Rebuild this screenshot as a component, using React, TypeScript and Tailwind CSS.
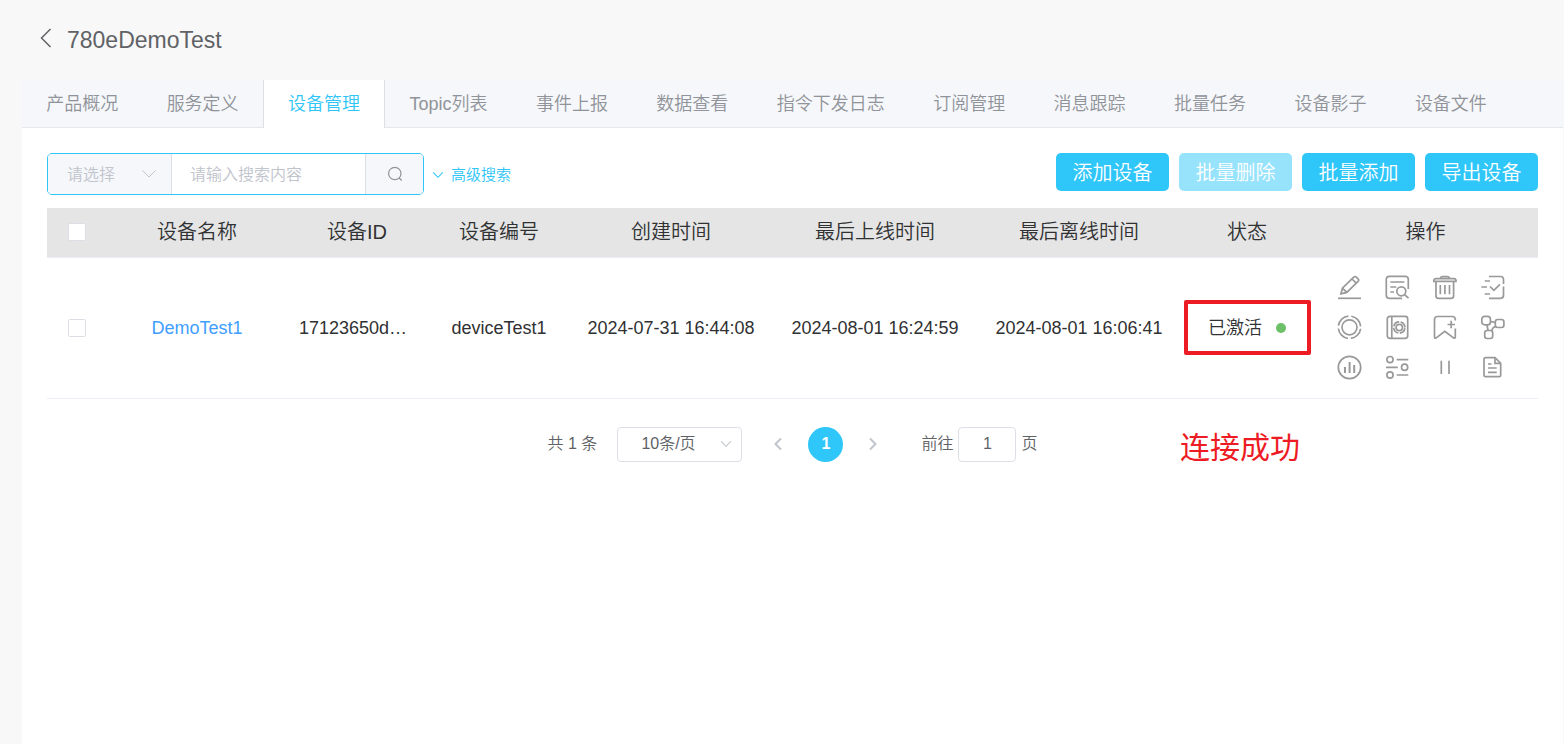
import React from 'react';
import clsx from 'clsx';

const tabs = [
  '产品概况',
  '服务定义',
  '设备管理',
  'Topic列表',
  '事件上报',
  '数据查看',
  '指令下发日志',
  '订阅管理',
  '消息跟踪',
  '批量任务',
  '设备影子',
  '设备文件',
];

const columns = [
  { title: '设备名称', width: 'w-[176px]' },
  { title: '设备ID', width: 'w-[144px]' },
  { title: '设备编号', width: 'w-[140px]' },
  { title: '创建时间', width: 'w-[204px]' },
  { title: '最后上线时间', width: 'w-[204px]' },
  { title: '最后离线时间', width: 'w-[204px]' },
  { title: '状态', width: 'w-[132px]' },
  { title: '操作', width: 'w-[225px]' },
];

const devices = [
  {
    name: 'DemoTest1',
    id: '17123650d…',
    code: 'deviceTest1',
    created: '2024-07-31 16:44:08',
    online: '2024-08-01 16:24:59',
    offline: '2024-08-01 16:06:41',
    status: '已激活',
  },
];

const actions = [
  {
    label: '编辑',
    icon: (
      <>
        <path d="M1 23.3h23" />
        <path d="M4 18.8l1.4-5.6L17 1.9a1.4 1.4 0 0 1 2 0l2.3 2.3a1.4 1.4 0 0 1 0 2L9.8 17.4z" />
        <path d="M5.4 13.2l4.4 4.2M15 4l4.2 4.2" />
      </>
    ),
  },
  {
    label: '查看',
    icon: (
      <>
        <path d="M23.3 14V4.3a3 3 0 0 0-3-3h-16a3 3 0 0 0-3 3v16a3 3 0 0 0 3 3H17" />
        <path d="M5.3 7h14M5.3 12h6M5.3 17H9" />
        <circle cx="16.3" cy="16.3" r="4.5" />
        <path d="M19.6 19.6l3.9 3.6" />
      </>
    ),
  },
  {
    label: '删除',
    icon: (
      <>
        <path d="M2.5 3.7h18.7a2 2 0 0 1 1.8 2.6H.8a2 2 0 0 1 1.7-2.6z" />
        <path d="M7.5 3.7c0-1.4.8-2 2-2h4.8c1.2 0 2 .6 2 2" />
        <path d="M3 6.3V21a2.3 2.3 0 0 0 2.3 2.3h13a2.3 2.3 0 0 0 2.3-2.3V6.3M7.3 10v9.3M11.9 10v9.3M16.5 10v9.3" />
      </>
    ),
  },
  {
    label: '激活',
    icon: (
      <>
        <path d="M8 1.5h11.5a3 3 0 0 1 3 3V9M22.5 11.5v8.8a3 3 0 0 1-3 3H8" />
        <path d="M3.7 6H9M.3 12H6M3.7 19H9M9 11.5l3.9 3.9 6-6" />
      </>
    ),
  },
  {
    label: '状态',
    icon: (
      <>
        <circle cx="12.5" cy="12.3" r="7.5" />
        <circle cx="12.5" cy="12.3" r="11.2" strokeDasharray="14.6 3" strokeDashoffset="-1.5" />
      </>
    ),
  },
  {
    label: '配置',
    icon: (
      <>
        <rect x="2.3" y="1.3" width="20.4" height="22" rx="2.5" />
        <path d="M6.8 1.3v22" />
        <circle cx="14.3" cy="12.5" r="3.2" />
        <circle cx="14.3" cy="12.5" r="5.6" strokeDasharray="7.3 1.5" strokeDashoffset="-.7" />
      </>
    ),
  },
  {
    label: '添加标签',
    icon: (
      <>
        <path d="M22.3 5.5V4.3a2.8 2.8 0 0 0-2.8-2.8H4.3a2.8 2.8 0 0 0-2.8 2.8V22c0 1.2.9 1.5 1.7.8l8.6-6.5 8.7 6.5c.8.7 1.8.4 1.8-.8v-8.5" />
        <path d="M14.5 9.5H22M18.2 5.8v7.5" />
      </>
    ),
  },
  {
    label: '拓扑',
    icon: (
      <>
        <rect x=".8" y="1.3" width="8.6" height="8.6" rx="3" />
        <rect x="14.3" y="4.5" width="8.6" height="8" rx="2.4" />
        <rect x="3.7" y="15.5" width="8" height="8" rx="2.4" />
        <path d="M9.3 6.5l5 .8M6 9.9l1 5.6M15 11.3c-2.5.7-3.8 2.2-4.5 4.7" />
      </>
    ),
  },
  {
    label: '统计',
    icon: (
      <>
        <circle cx="12.5" cy="12.5" r="11.2" />
        <path strokeWidth="2" d="M8 12v6M12.6 7v11M17.2 10v8" />
      </>
    ),
  },
  {
    label: '设置',
    icon: (
      <>
        <circle cx="5" cy="4.6" r="3.1" />
        <circle cx="19.6" cy="12.3" r="3.1" />
        <circle cx="5" cy="20" r="3.1" />
        <path d="M11.7 4.6h11.6M1 12.3h11.8M11.7 20h11.6" />
      </>
    ),
  },
  { label: '暂停', icon: <path d="M8.3 5.7V19M16 5.7V19" /> },
  {
    label: '日志',
    icon: (
      <>
        <path d="M14 2.7H4.5A1.5 1.5 0 0 0 3 4.2v16a1.5 1.5 0 0 0 1.5 1.5h13.7a1.5 1.5 0 0 0 1.5-1.5V8.3z" />
        <path d="M14 2.7v5.6h5.7M7 9h3.5M7 13h8.7M7 17.3h8.7" />
      </>
    ),
  },
];

function Chevron({ d, className }: { d: string; className?: string }) {
  return (
    <svg viewBox="0 0 16 16" fill="none" stroke="currentColor" className={className} aria-hidden="true">
      <path d={d} />
    </svg>
  );
}

const DOWN = 'M1.5 4.5L8 11l6.5-6.5';

function Header() {
  return (
    <header className="flex h-20 items-center gap-3 pl-[37px] text-[#606266]">
      <button aria-label="返回" className="-mt-1">
        <svg viewBox="0 0 18 20" fill="none" stroke="currentColor" strokeWidth="1.5" className="h-5 w-[18px]">
          <path d="M13.5 1L4.5 10l9 9" />
        </svg>
      </button>
      <h1 className="text-[23px] leading-none">780eDemoTest</h1>
    </header>
  );
}

function Tabs() {
  return (
    <nav className="border-b border-[#e4e7ed] bg-[#f5f7fa]">
      <div className="mr-[52px] flex h-[47px]">
        {tabs.map((tab) => (
          <a
            key={tab}
            href="#"
            className={clsx(
              'flex h-12 grow items-center justify-center whitespace-nowrap text-lg',
              tab === '设备管理'
                ? 'border-x border-[#dcdfe6] bg-white px-6 text-[#2fc5f7]'
                : 'px-6 text-[#909399]'
            )}
          >
            {tab}
          </a>
        ))}
      </div>
    </nav>
  );
}

function Toolbar() {
  return (
    <div className="flex items-start justify-between">
      <div className="flex items-center">
        <div className="flex h-[42px] w-[377px] overflow-hidden rounded-[5px] border border-[#2fc5f7] text-base">
          <div className="relative w-[124px] border-r border-[#dcdfe6] bg-[#f5f7fa] text-[#c0c4cc]">
            <select aria-label="搜索类型" className="h-full w-full appearance-none pt-0.5 pl-[19px] outline-none">
              <option>请选择</option>
            </select>
            <Chevron d={DOWN} className="pointer-events-none absolute top-3 right-3.5 size-4" />
          </div>
          <input
            aria-label="搜索内容"
            placeholder="请输入搜索内容"
            className="min-w-0 flex-1 pt-0.5 pl-[18px] outline-none placeholder:text-[#c0c4cc]"
          />
          <button
            aria-label="搜索"
            className="flex w-[58px] items-center justify-center border-l border-[#dcdfe6] bg-[#f5f7fa] text-[#909399]"
          >
            <svg viewBox="0 0 16 16" fill="none" stroke="currentColor" strokeWidth="1.2" className="size-4">
              <circle cx="7.8" cy="7.5" r="6.2" />
              <path d="M12.2 12l2.5 2.5" />
            </svg>
          </button>
        </div>
        <button className="ml-2 flex items-center gap-[7px] pt-0.5 text-[15px] text-[#2fc5f7]">
          <Chevron d={DOWN} className="size-3 stroke-[1.4]" />
          高级搜索
        </button>
      </div>
      <div className="flex gap-2.5 text-xl text-white">
        <button className="h-[38px] w-[113px] rounded-[5px] bg-[#2fc6f9] pt-0.5">添加设备</button>
        <button disabled className="h-[38px] w-[113px] rounded-[5px] bg-[#97e3fc] pt-0.5">
          批量删除
        </button>
        <button className="h-[38px] w-[113px] rounded-[5px] bg-[#2fc6f9] pt-0.5">批量添加</button>
        <button className="h-[38px] w-[113px] rounded-[5px] bg-[#2fc6f9] pt-0.5">导出设备</button>
      </div>
    </div>
  );
}

function Checkbox({ label }: { label: string }) {
  return (
    <input
      type="checkbox"
      aria-label={label}
      className="block size-[18px] appearance-none rounded-[2px] border border-[#dcdfe6] bg-white"
    />
  );
}

function DeviceTable() {
  return (
    <table className="mt-[13px] w-full table-fixed text-center text-[#303133]">
      <thead>
        <tr className="h-[49px] border-b border-[#ebeef5] bg-[#e5e5e5] text-xl">
          <th className="w-[62px] pl-[21px]">
            <Checkbox label="全选" />
          </th>
          {columns.map((col) => (
            <th key={col.title} className={clsx('font-[350]', col.width)}>
              {col.title}
            </th>
          ))}
        </tr>
      </thead>
      <tbody>
        {devices.map((device) => (
          <tr key={device.name} className="h-[141px] border-b border-[#ebeef5] text-lg whitespace-nowrap">
            <td className="pl-[21px]">
              <Checkbox label={device.name} />
            </td>
            <td>
              <a href="#" className="text-[#409eff]">
                {device.name}
              </a>
            </td>
            <td className="pr-2">{device.id}</td>
            <td>{device.code}</td>
            <td>{device.created}</td>
            <td>{device.online}</td>
            <td>{device.offline}</td>
            <td>
              <div className="mx-auto flex h-[55px] w-[127px] items-center justify-center gap-3.5 rounded-[2px] border-4 border-[#ed1c24]">
                {device.status}
                <span className="size-2.5 rounded-full bg-[#6cc067]" />
              </div>
            </td>
            <td className="pb-0.5 pl-6">
              <div className="grid w-[168px] grid-cols-4 gap-x-6 gap-y-4 text-[#999]">
                {actions.map((action) => (
                  <button key={action.label} aria-label={action.label} className="size-6">
                    <svg
                      viewBox="0 0 24 24"
                      fill="none"
                      stroke="currentColor"
                      strokeWidth="1.7"
                      className="size-6 overflow-visible"
                    >
                      {action.icon}
                    </svg>
                  </button>
                ))}
              </div>
            </td>
          </tr>
        ))}
      </tbody>
    </table>
  );
}

function Pagination() {
  return (
    <div className="relative mt-7 flex h-[35px] items-center justify-center text-base text-[#606266]">
      <span>共 1 条</span>
      <div className="relative ml-5 h-full w-[125px]">
        <select
          aria-label="每页条数"
          className="h-full w-full appearance-none rounded-[4px] border border-[#dcdfe6] pl-[23px] outline-none"
        >
          <option>10条/页</option>
        </select>
        <Chevron
          d={DOWN}
          className="pointer-events-none absolute top-[11px] right-2.5 size-3 stroke-[1.4] text-[#c0c4cc]"
        />
      </div>
      <button aria-label="上一页" className="ml-7 text-[#c0c4cc]">
        <Chevron d="M11 2.5L5.5 8l5.5 5.5" className="size-4 stroke-2" />
      </button>
      <button className="mx-[22px] size-[35px] rounded-full bg-[#2fc6f9] font-bold text-white">1</button>
      <button aria-label="下一页" className="text-[#c0c4cc]">
        <Chevron d="M5 2.5L10.5 8 5 13.5" className="size-4 stroke-2" />
      </button>
      <label className="ml-10 flex h-full items-center gap-[5px]">
        前往
        <input
          defaultValue="1"
          className="h-full w-[58px] rounded-[4px] border border-[#dcdfe6] text-center outline-none"
        />
        页
      </label>
      <strong className="absolute top-1.5 right-[238px] text-3xl leading-none font-normal text-[#ed1c24]">
        连接成功
      </strong>
    </div>
  );
}

export default function App() {
  return (
    <div className="flex min-h-screen flex-col bg-[#f8f8f8] font-['Liberation_Sans','Noto_Sans_CJK_SC',sans-serif] font-[350]">
      <Header />
      <main className="mr-px ml-[22px] grow bg-white">
        <Tabs />
        <div className="px-[25px] pt-[25px]">
          <Toolbar />
          <DeviceTable />
          <Pagination />
        </div>
      </main>
    </div>
  );
}
